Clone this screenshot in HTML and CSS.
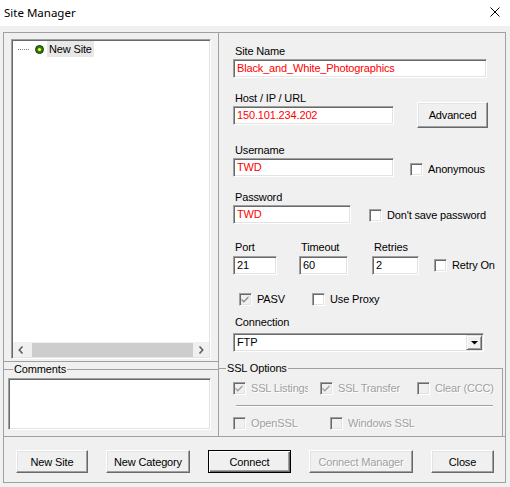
FILE: index.html
```html
<!DOCTYPE html>
<html>
<head>
<meta charset="utf-8">
<title>Site Manager</title>
<link rel="stylesheet" href="styles.css">
</head>
<body>
<div class="titlebar">
  <span class="title">Site Manager</span>
  <svg class="close" width="10" height="10" viewBox="0 0 10 10"><path d="M0.5 0.5 L9.5 9.5 M9.5 0.5 L0.5 9.5" stroke="#000" stroke-width="1" fill="none"/></svg>
</div>
<div class="client">
  <div class="panes">
    <div class="left">
      <div class="tree-frame">
        <div class="tree sunken">
          <div class="tree-list">
            <div class="tree-item">
              <span class="dots"></span>
              <svg class="site-icon" width="9" height="9" viewBox="0 0 9 9"><circle cx="4.5" cy="4.5" r="4" fill="#2f7a16" stroke="#173a0a" stroke-width="1"/><circle cx="4.5" cy="4.5" r="1.6" fill="#ffff33"/></svg>
              <span class="tree-label">New Site</span>
            </div>
          </div>
          <div class="hscroll">
            <span class="sb-arrow sb-left"><svg width="6" height="8" viewBox="0 0 6 8"><path d="M4.5 0.5 L1.3 4 L4.5 7.5" stroke="#606060" stroke-width="1.6" fill="none"/></svg></span>
            <span class="sb-thumb"></span>
            <span class="sb-arrow sb-right"><svg width="6" height="8" viewBox="0 0 6 8"><path d="M1.5 0.5 L4.7 4 L1.5 7.5" stroke="#606060" stroke-width="1.6" fill="none"/></svg></span>
          </div>
        </div>
      </div>
      <fieldset class="group comments-group">
        <legend>Comments</legend>
        <div class="comments-inner">
          <div class="comments-box sunken"></div>
        </div>
      </fieldset>
    </div>

    <div class="right">
      <div class="lbl">Site Name</div>
      <div class="edit red w-site">Black_and_White_Photographics</div>

      <div class="lbl mt13">Host / IP / URL</div>
      <div class="row">
        <div class="edit red w-host">150.101.234.202</div>
        <button class="btn btn-adv">Advanced</button>
      </div>

      <div class="lbl mt18">Username</div>
      <div class="row">
        <div class="edit red w-host">TWD</div>
        <span class="chk chk-anon"><span class="box"></span><span>Anonymous</span></span>
      </div>

      <div class="lbl mt13">Password</div>
      <div class="row">
        <div class="edit red w-pass">TWD</div>
        <span class="chk chk-dsp"><span class="box"></span><span>Don't save password</span></span>
      </div>

      <div class="row mt16">
        <div class="col col-port"><div class="lbl lbl-col">Port</div><div class="edit">21</div></div>
        <div class="col col-timeout"><div class="lbl lbl-col">Timeout</div><div class="edit">60</div></div>
        <div class="col col-retries"><div class="lbl lbl-col">Retries</div><div class="edit">2</div></div>
        <span class="chk chk-retry"><span class="box"></span><span>Retry On</span></span>
      </div>

      <div class="row row-pasv">
        <span class="chk chk-pasv"><span class="box box-dis"><svg width="11" height="11" viewBox="0 0 11 11"><path d="M1.5 4.5 L3.8 6.8 L8.5 2 L8.5 4 L3.8 8.7 L1.5 6.5 Z" fill="#8d8d8d"/></svg></span><span>PASV</span></span>
        <span class="chk"><span class="box"></span><span>Use Proxy</span></span>
      </div>

      <div class="lbl lbl-conn">Connection</div>
      <div class="combo sunken">
        <span class="combo-text">FTP</span>
        <span class="combo-btn"><svg width="7" height="4" viewBox="0 0 7 4"><path d="M0 0 L7 0 L3.5 3.5 Z" fill="#000"/></svg></span>
      </div>

      <fieldset class="group ssl-group">
        <legend>SSL Options</legend>
        <div class="ssl-inner">
          <div class="ssl-row">
            <span class="chk dis w87"><span class="box box-dis"><svg width="11" height="11" viewBox="0 0 11 11"><path d="M1.5 4.5 L3.8 6.8 L8.5 2 L8.5 4 L3.8 8.7 L1.5 6.5 Z" fill="#a0a0a0"/></svg></span><span class="clip">SSL Listings</span></span>
            <span class="chk dis w97"><span class="box box-dis"><svg width="11" height="11" viewBox="0 0 11 11"><path d="M1.5 4.5 L3.8 6.8 L8.5 2 L8.5 4 L3.8 8.7 L1.5 6.5 Z" fill="#a0a0a0"/></svg></span><span>SSL Transfer</span></span>
            <span class="chk dis"><span class="box box-dis"></span><span>Clear (CCC)</span></span>
          </div>
          <div class="sep"></div>
          <div class="ssl-row ssl-row2">
            <span class="chk dis w97"><span class="box box-dis"></span><span>OpenSSL</span></span>
            <span class="chk dis"><span class="box box-dis"></span><span>Windows SSL</span></span>
          </div>
        </div>
      </fieldset>
    </div>
  </div>

  <div class="buttons">
    <button class="btn b-newsite">New Site</button>
    <button class="btn b-newcat">New Category</button>
    <button class="btn btn-default b-connect">Connect</button>
    <button class="btn b-cm dis">Connect Manager</button>
    <button class="btn b-close">Close</button>
  </div>
</div>
</body>
</html>
```

FILE: styles.css
```css
* { box-sizing: border-box; }
html, body { margin: 0; padding: 0; }
body {
  width: 510px;
  height: 487px;
  overflow: hidden;
  background: #f0f0f0;
  font-family: "Liberation Sans", Arial, sans-serif;
  font-size: 11px;
  letter-spacing: -0.15px;
  color: #000;
}

/* title bar */
.titlebar {
  height: 26px;
  background: #fff;
  display: flex;
  align-items: center;
  justify-content: space-between;
  padding: 0 10px 2px 4px;
}
.title {
  font-family: "Noto Sans", "Open Sans", sans-serif;
  font-size: 11.5px;
  letter-spacing: 0;
}
.close { display: block; }

/* client */
.client { padding: 6px 4px 0 3px; }
.panes { display: flex; height: 404px; }

/* shared 3D styles */
.sunken {
  border: 1px solid;
  border-color: #a0a0a0 #fff #fff #a0a0a0;
  box-shadow: inset 1px 1px 0 #696969, inset -1px -1px 0 #e3e3e3;
  background: #fff;
}

/* left column */
.left {
  width: 215px;
  border-left: 1px solid #a0a0a0;
  display: flex;
  flex-direction: column;
}
.tree-frame {
  height: 330px;
  border-top: 1px solid #a0a0a0;
  border-bottom: 1px solid #a0a0a0;
  padding: 6px 0 0 7px;
}
.tree {
  width: 200px;
  height: 320px;
  padding: 1px;
  display: flex;
  flex-direction: column;
}
.tree-list { flex: 1; }
.tree-item {
  display: flex;
  align-items: center;
  height: 16px;
  padding-left: 5px;
}
.dots {
  width: 11px;
  height: 1px;
  background: repeating-linear-gradient(90deg, #808080 0 1px, transparent 1px 2px);
}
.site-icon { display: block; margin-left: 6px; }
.tree-label {
  margin-left: 3px;
  padding: 0 2px 0 2px;
  line-height: 16px;
  background: #e8e8e8;
}
.hscroll {
  height: 15px;
  display: flex;
  background: #f0f0f0;
}
.sb-arrow {
  display: flex;
  align-items: center;
  padding-left: 5px;
}
.sb-left { width: 19px; }
.sb-right { width: 16px; }
.sb-arrow svg { display: block; }
.sb-thumb {
  flex: 1;
  background: #cdcdcd;
  margin-top: 1px;
}

/* group boxes */
.group {
  margin: 0;
  padding: 0;
  border: 0;
  border-top: 1px solid #a0a0a0;
  min-width: 0;
}
.group legend {
  padding: 0 1px;
  line-height: 14px;
  font-size: 11px;
}
.comments-group { flex: 1; }
.comments-group legend { margin-left: 9px; }
.comments-inner { padding: 2px 0 0 4px; }
.comments-box { width: 203px; height: 52px; }

/* right column */
.right {
  width: 288px;
  border: 1px solid #a0a0a0;
  border-bottom: 0;
  padding: 11px 0 0 14px;
  display: flex;
  flex-direction: column;
  align-items: flex-start;
}
.lbl {
  height: 14px;
  line-height: 14px;
  padding-left: 2px;
  margin-bottom: 1px;
  white-space: nowrap;
}
.lbl-col { margin-bottom: 2px; }
.lbl-conn { margin-top: 9px; margin-bottom: 4px; }
.mt13 { margin-top: 13px; }
.mt16 { margin-top: 16px; }
.mt18 { margin-top: 18px; }

.edit {
  height: 19px;
  line-height: 15px;
  padding: 1px 3px 0;
  white-space: nowrap;
  overflow: hidden;
  border: 1px solid;
  border-color: #a0a0a0 #fff #fff #a0a0a0;
  box-shadow: inset 1px 1px 0 #696969, inset -1px -1px 0 #e3e3e3;
  background: #fff;
}
.red { color: #ff0000; }
.w-site { width: 254px; }
.w-host { width: 161px; }
.w-pass { width: 118px; }

.row { display: flex; align-items: flex-start; }
.col-port { width: 44px; }
.col-timeout { width: 49px; margin-left: 22px; }
.col-retries { width: 47px; margin-left: 24px; }

/* checkboxes */
.chk {
  display: inline-flex;
  align-items: center;
  height: 13px;
  gap: 5px;
  white-space: nowrap;
  line-height: 13px;
}
.box {
  width: 13px;
  height: 13px;
  flex: none;
  border: 1px solid;
  border-color: #a0a0a0 #fff #fff #a0a0a0;
  box-shadow: inset 1px 1px 0 #696969, inset -1px -1px 0 #e3e3e3;
  background: #fff;
  display: flex;
  align-items: center;
  justify-content: center;
}
.box svg { display: block; }
.box-dis { background: #f0f0f0; }
.chk-anon { margin: 5px 0 0 16px; }
.chk-dsp { margin: 4px 0 0 18px; }
.chk-retry { margin: 19px 0 0 15px; }
.row-pasv { margin-top: 18px; padding-left: 6px; }
.chk-pasv { width: 73px; }
.w87 { width: 87px; }
.w97 { width: 97px; }
.clip { width: 57px; overflow: hidden; }

.dis { color: #a0a0a0; text-shadow: 1px 1px 0 #fff; }

/* combo */
.combo {
  width: 251px;
  height: 19px;
  padding: 1px;
  display: flex;
}
.combo-text { flex: 1; line-height: 15px; padding-left: 2px; }
.combo-btn {
  width: 16px;
  height: 15px;
  background: #f0f0f0;
  border: 1px solid;
  border-color: #e3e3e3 #696969 #696969 #e3e3e3;
  box-shadow: inset 1px 1px 0 #fff, inset -1px -1px 0 #a0a0a0;
  display: flex;
  align-items: center;
  justify-content: center;
}
.combo-btn svg { display: block; }

/* SSL options */
.ssl-group {
  align-self: stretch;
  flex: 1;
  margin: 9px 2px 0 -14px;
  border-right: 1px solid #a0a0a0;
}
.ssl-group legend { margin-left: 7px; }
.ssl-inner { padding: 7px 0 0 14px; }
.ssl-row { display: flex; align-items: center; }
.ssl-row2 { margin-top: 10px; }
.sep {
  margin: 10px 0 0 3px;
  width: 257px;
  border-top: 1px solid #a0a0a0;
  border-bottom: 1px solid #fff;
}

/* buttons */
.buttons {
  height: 47px;
  border: 1px solid #a0a0a0;
  display: flex;
  align-items: flex-start;
  gap: 18px;
  padding: 13px 0 0 12px;
}
.btn {
  height: 23px;
  padding: 0;
  margin: 0;
  font: inherit;
  letter-spacing: inherit;
  color: #000;
  background: #f0f0f0;
  border: 1px solid;
  border-color: #fff #696969 #696969 #fff;
  box-shadow: inset -1px -1px 0 #a0a0a0, inset 1px 1px 0 #e3e3e3;
  white-space: nowrap;
}
.btn.dis { color: #a0a0a0; text-shadow: 1px 1px 0 #fff; }
.btn-default {
  border-color: #000;
  box-shadow: inset 1px 1px 0 #fff, inset -1px -1px 0 #696969, inset -2px -2px 0 #a0a0a0;
}
.btn-adv { width: 71px; height: 26px; margin: -4px 0 -3px 23px; }
.b-newsite { width: 72px; }
.b-newcat { width: 84px; }
.b-connect { width: 83px; }
.b-cm { width: 104px; }
.b-close { width: 63px; }
```
